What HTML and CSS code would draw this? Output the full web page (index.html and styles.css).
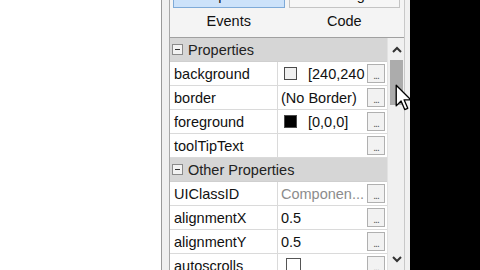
FILE: index.html
```html
<!DOCTYPE html>
<html lang="en">

<head>
    <meta charset="UTF-8">
    <title>Inspector</title>
    <link rel="stylesheet" href="styles.css">
</head>

<body>
    <div class="blank"></div>
    <div class="panel">
        <div class="box">
            <div class="tabs">
                <div class="btns">
                    <span class="btn active"><span>Properties</span></span>
                    <span class="btn"><span>Bindings</span></span>
                </div>
                <div class="labels">
                    <span>Events</span>
                    <span>Code</span>
                </div>
            </div>
            <div class="body">
                <div class="table">
                    <div class="cat"><i class="minus"></i>Properties</div>
                    <div class="row">
                        <div class="name">background</div>
                        <div class="val"><i class="swatch"></i><span class="clip">[240,240</span><b class="dots">...</b></div>
                    </div>
                    <div class="row">
                        <div class="name">border</div>
                        <div class="val"><span class="clip">(No Border)</span><b class="dots">...</b></div>
                    </div>
                    <div class="row">
                        <div class="name">foreground</div>
                        <div class="val"><i class="swatch black"></i><span class="clip">[0,0,0]</span><b class="dots">...</b></div>
                    </div>
                    <div class="row">
                        <div class="name">toolTipText</div>
                        <div class="val"><span class="clip"></span><b class="dots">...</b></div>
                    </div>
                    <div class="cat"><i class="minus"></i>Other Properties</div>
                    <div class="row">
                        <div class="name">UIClassID</div>
                        <div class="val"><span class="clip grey">Componen...</span><b class="dots">...</b></div>
                    </div>
                    <div class="row">
                        <div class="name">alignmentX</div>
                        <div class="val"><span class="clip">0.5</span><b class="dots">...</b></div>
                    </div>
                    <div class="row">
                        <div class="name">alignmentY</div>
                        <div class="val"><span class="clip">0.5</span><b class="dots">...</b></div>
                    </div>
                    <div class="row">
                        <div class="name">autoscrolls</div>
                        <div class="val"><i class="check"></i><span class="clip"></span><b class="dots">...</b></div>
                    </div>
                </div>
                <div class="scroll">
                    <div class="arrow">
                        <svg width="10" height="7" viewBox="0 0 10 7"><path d="M1 6 L5 2 L9 6" fill="none" stroke="#333" stroke-width="2"/></svg>
                    </div>
                    <div class="thumb"></div>
                    <div class="track"></div>
                    <div class="arrow">
                        <svg width="10" height="7" viewBox="0 0 10 7"><path d="M1 1 L5 5 L9 1" fill="none" stroke="#333" stroke-width="2"/></svg>
                    </div>
                </div>
            </div>
        </div>
    </div>
    <div class="dark"></div>
    <!-- mouse pointer over the scrollbar -->
    <svg class="cursor" width="17" height="28" viewBox="0 0 14 23">
        <path d="M1 1 L1 18 L5 14 L8 21 L10.5 20 L7.5 13 L13 13 Z" fill="#fff" stroke="#000" stroke-width="1.1" stroke-linejoin="round"/>
    </svg>
</body>

</html>
```

FILE: styles.css
```css
* {
    margin: 0;
    padding: 0;
    box-sizing: border-box;
}

body {
    display: flex;
    width: 480px;
    height: 270px;
    overflow: hidden;
    background-color: #fff;
    font-family: "Liberation Sans", Arial, sans-serif;
    font-size: 14.5px;
    color: #111;
}

.blank {
    width: 161px;
    background-color: #fff;
}

.panel {
    width: 249px;
    height: 270px;
    padding: 0 5px 0 7px;
    background-color: #f0f0f0;
    border-left: 1px solid #9a9a9a;
}

.box {
    height: 270px;
    display: flex;
    flex-direction: column;
    border-left: 1px solid #a8a8a8;
    border-right: 1px solid #c8c8c8;
    overflow: hidden;
}

.dark {
    flex: 1;
    background-color: #000;
}

/* tab buttons, only their bottom edge shows */
.tabs {
    flex-shrink: 0;
    height: 38px;
    background-color: #f4f4f4;
    border-bottom: 1px solid #a0a0a0;
}

.btns {
    display: flex;
    gap: 4px;
    padding: 0 4px 0 3px;
}

.btn {
    flex: 1;
    height: 8px;
    overflow: hidden;
    border: 1px solid #c4c4c4;
    border-top: none;
    background-color: #f6f6f6;
    text-align: center;
}

.btn span {
    display: block;
    margin-top: -13px;
    line-height: 16px;
}

.btn.active {
    background-color: #cce2fa;
    border-color: #7eaad8;
}

.labels {
    display: flex;
    padding: 4px 4px 0 3px;
    gap: 4px;
}

.labels span {
    flex: 1;
    text-align: center;
    line-height: 18px;
}

.body {
    flex: 1;
    min-height: 0;
    display: flex;
    overflow: hidden;
}

.table {
    width: 217px;
    background-color: #fff;
}

.cat {
    display: flex;
    align-items: center;
    height: 24px;
    padding-left: 2px;
    background-color: #d6d6d6;
    border-bottom: 1px solid #cfcfcf;
    color: #222;
}

.minus {
    position: relative;
    width: 11px;
    height: 11px;
    margin-right: 5px;
    border: 1px solid #8a8a8a;
    background-color: #f2f2f2;
}

.minus::after {
    content: "";
    position: absolute;
    left: 2px;
    top: 4px;
    width: 5px;
    height: 1px;
    background-color: #333;
}

.row {
    display: flex;
    height: 24px;
    border-bottom: 1px solid #dadada;
}

.name {
    width: 108px;
    padding-left: 4px;
    line-height: 24px;
    border-right: 1px solid #dadada;
}

.val {
    flex: 1;
    display: flex;
    align-items: center;
    padding-left: 3px;
    overflow: hidden;
}

.clip {
    flex: 1;
    min-width: 0;
    white-space: nowrap;
    overflow: hidden;
}

.grey {
    color: #8c8c8c;
}

.swatch {
    width: 13px;
    height: 13px;
    margin: 0 11px 0 3px;
    border: 1px solid #4a4a4a;
    background-color: #f0f0f0;
}

.swatch.black {
    background-color: #000;
}

.check {
    width: 15px;
    height: 15px;
    margin: 0 0 0 5px;
    border: 1px solid #555;
    background-color: #fff;
}

.dots {
    flex-shrink: 0;
    width: 18px;
    height: 19px;
    margin-right: 2px;
    border: 1px solid #b0b0b0;
    background-color: #f2f2f2;
    font-weight: normal;
    font-size: 10px;
    line-height: 22px;
    text-align: center;
    color: #555;
    letter-spacing: -1px;
    overflow: hidden;
}

.scroll {
    flex: 1;
    display: flex;
    flex-direction: column;
    padding: 0 1px 0 2px;
    background-color: #f0f0f0;
    border-left: 1px solid #e2e2e2;
}

.arrow {
    height: 22px;
    display: flex;
    align-items: center;
    justify-content: center;
}

.thumb {
    height: 45px;
    background-color: #acacac;
}

.track {
    flex: 1;
}

.cursor {
    position: absolute;
    left: 395px;
    top: 84px;
}
```
